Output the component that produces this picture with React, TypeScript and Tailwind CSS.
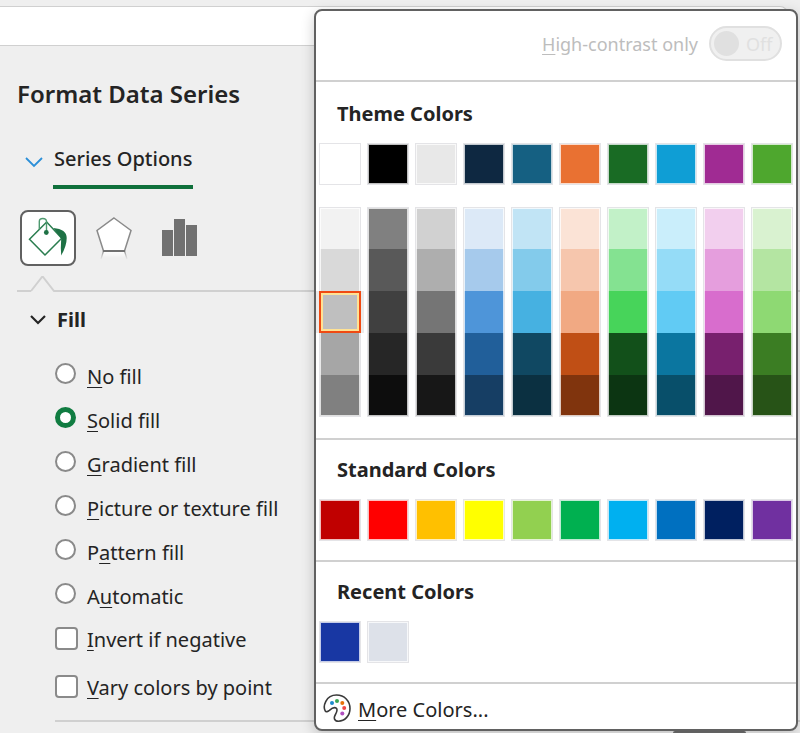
import React, { useState } from "react";

const themeRow = [
  "bg-white",
  "bg-black",
  "bg-[#e8e8e8]",
  "bg-[#0e2841]",
  "bg-[#156082]",
  "bg-[#e97132]",
  "bg-[#196b24]",
  "bg-[#0f9ed5]",
  "bg-[#a02b93]",
  "bg-[#4ea72e]",
];

const tintColumns = [
  ["bg-[#f2f2f2]", "bg-[#d9d9d9]", "bg-[#bfbfbf]", "bg-[#a6a6a6]", "bg-[#808080]"],
  ["bg-[#808080]", "bg-[#595959]", "bg-[#404040]", "bg-[#262626]", "bg-[#0d0d0d]"],
  ["bg-[#d1d1d1]", "bg-[#aeaeae]", "bg-[#757575]", "bg-[#3a3a3a]", "bg-[#171717]"],
  ["bg-[#dce9f7]", "bg-[#a6caec]", "bg-[#4e95d9]", "bg-[#215f9a]", "bg-[#163e64]"],
  ["bg-[#c1e4f5]", "bg-[#83cbeb]", "bg-[#46b1e1]", "bg-[#104862]", "bg-[#0b3041]"],
  ["bg-[#fbe3d6]", "bg-[#f6c6ad]", "bg-[#f1a983]", "bg-[#c04f15]", "bg-[#80340d]"],
  ["bg-[#c2f1c8]", "bg-[#84e291]", "bg-[#47d45a]", "bg-[#12501a]", "bg-[#0c3512]"],
  ["bg-[#caeefb]", "bg-[#95dcf7]", "bg-[#61cbf4]", "bg-[#0b76a0]", "bg-[#084f6a]"],
  ["bg-[#f2cfee]", "bg-[#e59edd]", "bg-[#d86dcd]", "bg-[#78206e]", "bg-[#50164a]"],
  ["bg-[#d9f2d0]", "bg-[#b4e5a2]", "bg-[#8ed973]", "bg-[#3b7d23]", "bg-[#275317]"],
];

const standardRow = [
  "bg-[#c00000]",
  "bg-[#ff0000]",
  "bg-[#ffc000]",
  "bg-[#ffff00]",
  "bg-[#92d050]",
  "bg-[#00b050]",
  "bg-[#00b0f0]",
  "bg-[#0070c0]",
  "bg-[#002060]",
  "bg-[#7030a0]",
];

const recentRow = ["bg-[#1837a3]", "bg-[#dde1e9]"];

function Mnemonic({ text, at = 0 }: { text: string; at?: number }) {
  return (
    <span>
      {text.slice(0, at)}
      <span className="underline decoration-1 underline-offset-[3px]">{text[at]}</span>
      {text.slice(at + 1)}
    </span>
  );
}

function SwatchRow({ colors, name }: { colors: string[]; name: string }) {
  return (
    <div className="flex gap-[6px] px-[3px]">
      {colors.map((c, i) => (
        <button
          key={i}
          type="button"
          aria-label={`${name} ${i + 1}`}
          className="size-[42px] border border-[#e4e4e7] bg-white"
        >
          <span className={`block size-10 border border-white/75 ${c}`} />
        </button>
      ))}
    </div>
  );
}

function TintColumn({ colors, index }: { colors: string[]; index: number }) {
  return (
    <div className="flex w-[42px] flex-col border border-[#e4e4e7]">
      {colors.map((c, i) => {
        const selected = index === 0 && i === 2;
        const edge =
          i === 0 ? "h-[41px] border-t" : i === 4 ? "h-[41px] border-b" : "h-[42px]";
        return (
          <button
            key={i}
            type="button"
            aria-label={`Tint ${index + 1}-${i + 1}`}
            aria-pressed={selected}
            className={
              selected
                ? `relative -mx-px h-[42px] border-2 border-[#f04a12] shadow-[inset_0_0_0_2px_#ffe294,-3px_0_0_0_#ebebeb,3px_0_0_0_#ebebeb] ${c}`
                : `border-x border-white/75 ${edge} ${c}`
            }
          />
        );
      })}
    </div>
  );
}

const fills = [
  { label: "No fill", at: 0 },
  { label: "Solid fill", at: 0 },
  { label: "Gradient fill", at: 0 },
  { label: "Picture or texture fill", at: 0 },
  { label: "Pattern fill", at: 1 },
  { label: "Automatic", at: 1 },
];

function FormatPane() {
  const [fill, setFill] = useState("Solid fill");
  return (
    <main className="pl-[17px] pt-8">
      <h1 className="text-[24px] font-semibold leading-8">Format Data Series</h1>

      <button type="button" className="mt-8 flex items-start pl-2">
        <svg className="mt-[15px] mr-[10px]" width="18" height="11" viewBox="0 0 18 11" fill="none">
          <path d="M1 1l8 8 8-8" stroke="#2b8fd8" strokeWidth="1.8" />
        </svg>
        <span className="border-b-4 border-[#0f703b] px-px pb-3 pt-[3px] text-[20px] font-medium leading-7">
          Series Options
        </span>
      </button>

      <div className="mt-[21px] flex items-center pl-[3px]">
        <button
          type="button"
          aria-label="Fill and line"
          className="flex size-14 items-center justify-center rounded-lg border-2 border-[#616161] bg-white"
        >
          <svg width="52" height="52" viewBox="0 0 52 52" fill="none">
            <path d="M7.500 27.300L24.700 10l15 16.200L23 43z" stroke="#2a7d4f" strokeWidth="1.5" />
            <path d="M17.300 17.500V9.500q0-3 3.500-3t3.700 3V20" stroke="#4f9a70" strokeWidth="1.4" />
            <circle cx="24.300" cy="20.500" r="2.400" fill="#1e7145" />
            <path d="M31.300 16Q44.700 17 44.700 26Q44.700 34 39.200 43.500Q38.500 36 39.200 26.500z" fill="#1e7145" />
          </svg>
        </button>
        <button type="button" aria-label="Effects" className="ml-5">
          <svg width="36" height="44" viewBox="0 0 36 44" fill="none">
            <defs>
              <linearGradient id="reflect" x1="0" y1="0" x2="0" y2="1">
                <stop offset="0" stopColor="#fff" />
                <stop offset="1" stopColor="#fff" stopOpacity="0" />
              </linearGradient>
              <linearGradient id="reflectLine" x1="0" y1="34" x2="0" y2="43" gradientUnits="userSpaceOnUse">
                <stop offset="0" stopColor="#777" />
                <stop offset="1" stopColor="#999" stopOpacity="0.1" />
              </linearGradient>
            </defs>
            <path d="M7 35h22l3 7H4z" fill="url(#reflect)" />
            <path d="M7.500 35l-2.500 8M28.500 35l2.500 8" stroke="url(#reflectLine)" strokeWidth="1.3" />
            <path d="M18 2L35 14.500 28.500 35h-21L1 14.500z" fill="#fff" stroke="#8a8a8a" strokeWidth="1.500" />
            <path d="M7 35h22" stroke="#717171" strokeWidth="2" />
          </svg>
        </button>
        <button type="button" aria-label="Series options" className="ml-[30px]">
          <svg width="35" height="39" viewBox="0 0 35 39" fill="#717171">
            <path d="M0 11h11v26H0zM12 0h11v37H12zM24 6h11V37H24z" />
          </svg>
        </button>
      </div>

      <div className="mt-[9px] flex items-end">
        <span className="w-[14px] border-b-2 border-[#d0d0d0]" />
        <svg width="24" height="17" viewBox="0 0 24 17" fill="none">
          <path d="M0 16L11 2l1 0 11 14h1" stroke="#d0d0d0" strokeWidth="2" />
        </svg>
        <span className="grow border-b-2 border-[#d0d0d0]" />
      </div>

      <button type="button" className="mt-[14px] flex items-center pl-[13px] text-[20px] font-bold leading-7">
        <svg className="mr-[11px]" width="16" height="10" viewBox="0 0 16 10" fill="none">
          <path d="M1 1l7 7 7-7" stroke="#242424" strokeWidth="2.200" />
        </svg>
        Fill
      </button>

      <div className="mt-5 pl-[38px] text-[20px] leading-7">
        <div role="radiogroup" aria-label="Fill">
          {fills.map((f) => (
            <label key={f.label} className="flex h-11 items-start pt-[9px]">
              <input
                type="radio"
                name="fill"
                checked={fill === f.label}
                onChange={() => setFill(f.label)}
                className="mr-[11px] size-[21px] appearance-none rounded-full border-2 border-[#8a8a8a] bg-white checked:border-[5px] checked:border-[#107c41]"
              />
              <Mnemonic text={f.label} at={f.at} />
            </label>
          ))}
        </div>
        {["Invert if negative", "Vary colors by point"].map((t) => (
          <label key={t} className="flex h-12 items-start pt-2">
            <input
              type="checkbox"
              className="mr-[9px] mt-px size-[23px] appearance-none rounded-[4px] border-2 border-[#8a8a8a] bg-white checked:bg-[#107c41]"
            />
            <Mnemonic text={t} />
          </label>
        ))}
        <hr className="mt-[6px] border-t-2 border-[#d0d0d0]" />
      </div>
    </main>
  );
}

function ColorMenu() {
  const heading = "px-[21px] text-[20px] font-bold leading-7";
  const rule = "border-t-2 border-[#d0d0d0]";
  return (
    <aside className="absolute right-[2px] top-[9px] w-[484px] rounded-lg border-2 border-[#616161] bg-white shadow-[0_4px_14px_rgba(0,0,0,0.2)]">
      <div className="flex h-[69px] items-center justify-end gap-[11px] pb-1 pr-[14px] text-[#bdbdbd]">
        <span id="contrast" className="text-[18px] leading-6">
          <Mnemonic text="High-contrast only" />
        </span>
        <button
          type="button"
          role="switch"
          aria-checked={false}
          aria-labelledby="contrast"
          disabled
          className="flex h-[35px] w-[73px] items-center gap-[7px] rounded-full border-2 border-[#e0e0e0] bg-[#f0f0f0] pl-[3px] text-[18px] leading-6 text-[#e0e0e0]"
        >
          <span className="size-[25px] rounded-full bg-[#e0e0e0]" />
          Off
        </button>
      </div>

      <section className={rule}>
        <h2 className={`${heading} pb-[15px] pt-[18px]`}>Theme Colors</h2>
        <SwatchRow colors={themeRow} name="Theme color" />
        <div className="mb-[21px] mt-[22px] flex gap-[6px] px-[3px]">
          {tintColumns.map((c, i) => (
            <TintColumn key={i} colors={c} index={i} />
          ))}
        </div>
      </section>

      <section className={rule}>
        <h2 className={`${heading} pb-[15px] pt-4`}>Standard Colors</h2>
        <SwatchRow colors={standardRow} name="Standard color" />
      </section>

      <section className={`mt-[19px] ${rule}`}>
        <h2 className={`${heading} pb-[15px] pt-4`}>Recent Colors</h2>
        <SwatchRow colors={recentRow} name="Recent color" />
      </section>

      <button
        type="button"
        className={`mt-[19px] flex h-[47px] w-full items-start gap-[7px] pl-[7px] pt-[10px] text-[20px] leading-8 ${rule}`}
      >
        <svg width="28" height="28" viewBox="0 0 28 28" fill="none">
          <path
            d="M2.200 16.800C-.2 12.500 2.500 1 13.500 1C21.500 1 27 7 27 14.500C27 22 21.500 27.200 15.500 27.200C11 27.200 10.600 23.800 12.200 21C13.600 18.600 15.200 15.800 13.200 14.200C11 12.600 8.400 14.600 6.400 16.300C4.800 17.600 3 18.400 2.200 16.800Z"
            stroke="#3a3a3a"
            strokeWidth="1.600"
          />
          <circle cx="9" cy="9" r="2" fill="#1e8bcd" />
          <circle cx="14" cy="7" r="2" fill="#3aa655" />
          <circle cx="19.300" cy="9" r="2" fill="#e8710a" />
          <circle cx="21.200" cy="14" r="2" fill="#f04848" />
          <circle cx="19.300" cy="19.500" r="2" fill="#b04fc0" />
        </svg>
        <Mnemonic text="More Colors..." />
      </button>
    </aside>
  );
}

export default function App() {
  return (
    <div className="relative min-h-screen overflow-hidden bg-[#efefef] pt-[6px] font-['Noto_Sans','Open_Sans',sans-serif] text-[#242424]">
      <div className="mr-3 h-10 rounded-tr-lg border-y border-r border-[#d0d0d0] bg-white" />
      <FormatPane />
      <div className="absolute bottom-0 right-[54px] h-[2px] w-[73px] rounded-t bg-[#707070]" />
      <ColorMenu />
    </div>
  );
}
